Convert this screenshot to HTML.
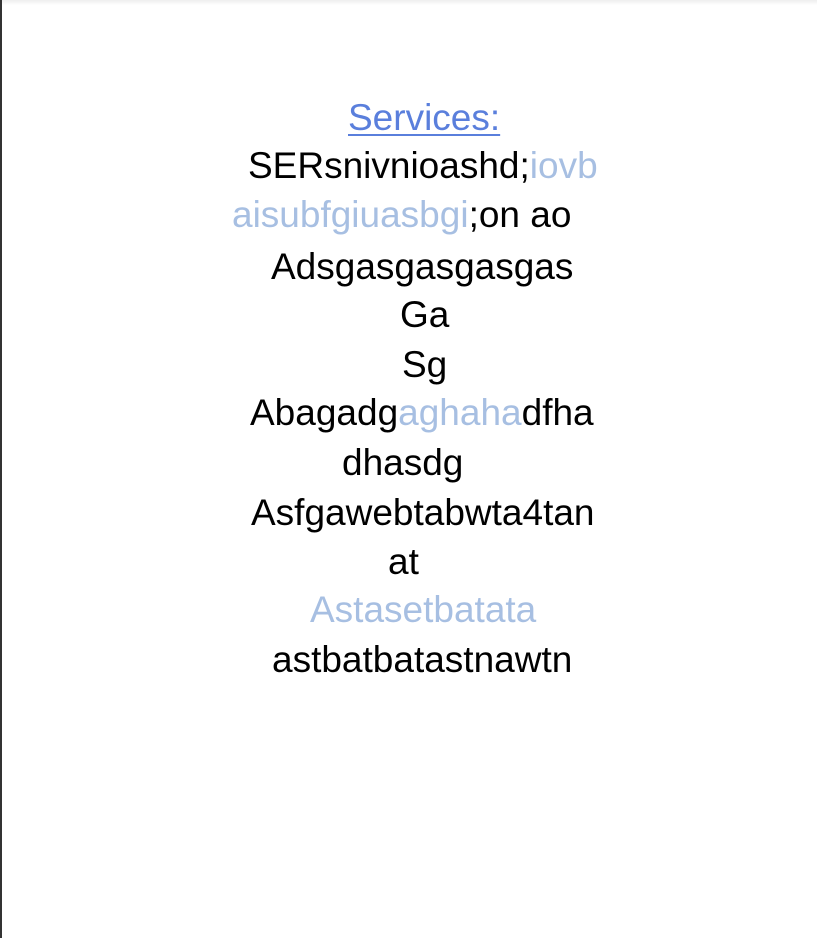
<!DOCTYPE html>
<html><head><meta charset="utf-8"><style>
html,body{margin:0;padding:0;width:817px;height:938px;overflow:hidden;background:#fff;}
body{position:relative;font-family:"Liberation Sans",Arial,sans-serif;font-size:37px;color:#000;}
.l{position:absolute;line-height:42px;white-space:pre;}
.b{color:#a7bfe2}
.s{color:#5a7fdc;text-decoration:underline;text-decoration-thickness:2px;text-underline-offset:4px}
#lb{position:absolute;left:0;top:0;width:2px;height:938px;background:#333}
#tb{position:absolute;left:0;top:0;width:817px;height:5px;background:linear-gradient(#eee,#fff)}
</style></head><body>
<div id="tb"></div><div id="lb"></div>
<div class="l s" style="left:348px;top:97px">Services:</div>
<div class="l" style="left:248px;top:145px">SERsnivnioashd;<span class="b">iovb</span></div>
<div class="l" style="left:232px;top:194px"><span class="b">aisubfgiuasbgi</span>;on ao</div>
<div class="l" style="left:271px;top:246px">Adsgasgasgasgas</div>
<div class="l" style="left:400px;top:294px">Ga</div>
<div class="l" style="left:402px;top:344px">Sg</div>
<div class="l" style="left:250px;top:392px">Abagadg<span class="b">aghaha</span>dfha</div>
<div class="l" style="left:342px;top:442px">dhasdg</div>
<div class="l" style="left:251px;top:492px">Asfgawebtabwta4tan</div>
<div class="l" style="left:388px;top:541px">at</div>
<div class="l b" style="left:310px;top:589px">Astasetbatata</div>
<div class="l" style="left:272px;top:639px">astbatbatastnawtn</div>
</body></html>
